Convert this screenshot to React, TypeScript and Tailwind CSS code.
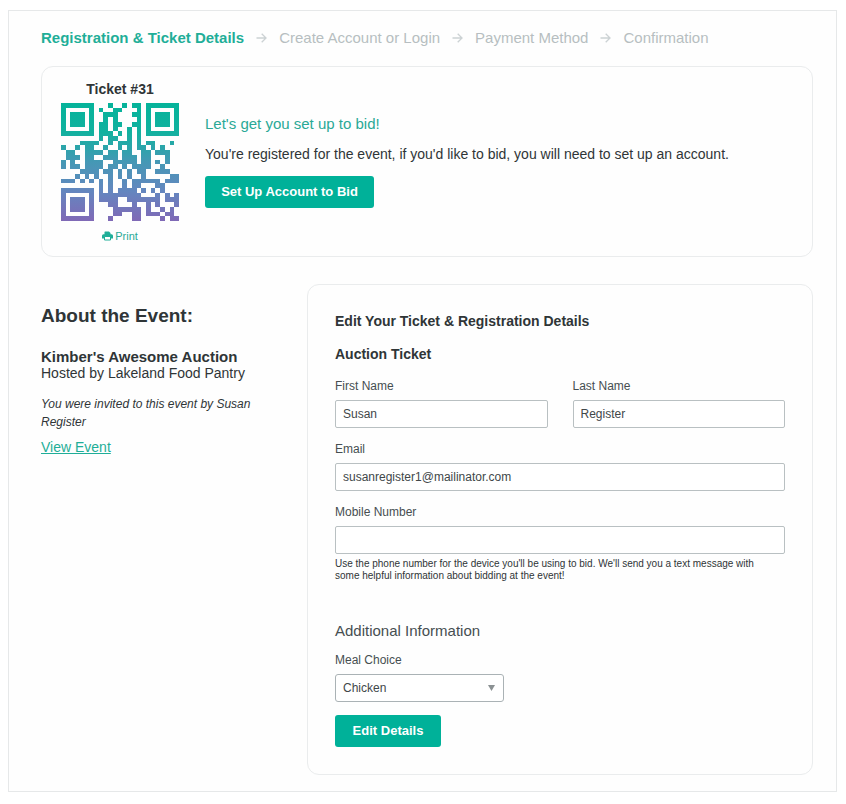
import { useState } from 'react'

const STEPS = ['Registration & Ticket Details', 'Create Account or Login', 'Payment Method', 'Confirmation']

const MEALS = ['Chicken', 'Beef', 'Vegetarian']

const QR_ROWS = [
  '#######...#..#.##.#######',
  '#.....#.#..##...#.#.....#',
  '#.###.#..###...##.#.###.#',
  '#.###.#..#.#....#.#.###.#',
  '#.###.#.##.##..##.#.###.#',
  '#.....#.##.#..#.#.#.....#',
  '#######.###.#.#.#.#######',
  '........#.##..#.#........',
  '....####..#.###.#.##...#.',
  '#..#.##..#..#.#.##.#.#...',
  '.##..####.##.##..##.###..',
  '.###.##..###.###.##...#..',
  '#.#..####..#####.##.#.#..',
  '#.##.####.##.#.####..#...',
  '....####.##.#.#.##..###..',
  '...#.#.#..#.#.#..#.....##',
  '###.#.#.#.#..#.######.###',
  '........#.#..#.##...##...',
  '#######.#.#.####.#.#.#...',
  '#.....#.#########...#.#.#',
  '#.###.#.####..#######.###',
  '#.###.#...##...#..#.#...#',
  '#.###.#....######.#..#.#.',
  '#.....#....##..##.###.##.',
  '#######...#....##....#.##',
]

const qrPath = QR_ROWS.flatMap((row, y) =>
  [...row].map((cell, x) => (cell === '#' ? `M${x} ${y}h1v1h-1z` : ''))
).join('')

function QrCode() {
  return (
    <svg viewBox="0 0 25 25" className="size-[118px]" shapeRendering="crispEdges" role="img" aria-label="Ticket QR code">
      <defs>
        <linearGradient id="qr" gradientUnits="userSpaceOnUse" x1="0" y1="0" x2="0" y2="25">
          <stop offset="0" stopColor="#05b39a" />
          <stop offset="0.25" stopColor="#12b19f" />
          <stop offset="0.5" stopColor="#4598b5" />
          <stop offset="0.75" stopColor="#6486bf" />
          <stop offset="1" stopColor="#8069b6" />
        </linearGradient>
      </defs>
      <path d={qrPath} fill="url(#qr)" />
    </svg>
  )
}

function StepArrow() {
  return (
    <svg viewBox="0 0 11 10" className="h-[10px] w-[11px]" fill="none" stroke="#ccd2d4" strokeWidth="1.3" aria-hidden="true">
      <path d="M0.500 5H10M5.700 0.800L10 5 5.700 9.200" />
    </svg>
  )
}

function PrintIcon() {
  return (
    <svg viewBox="0 0 11 10" className="h-[10px] w-[11px]" aria-hidden="true">
      <path d="M3 0.5h4l1.5 1.5v2H2.5V1z" fill="#1fae98" />
      <path d="M1.500 3.200h8Q11 3.200 11 4.700V7.500H9V6H2v1.500H0V4.700q0-1.500 1.500-1.500z" fill="#1fae98" />
      <path d="M2.500 5.500h6v3.500h-6z" fill="#fff" stroke="#1fae98" />
    </svg>
  )
}

interface FieldProps {
  id: string
  label: string
  value: string
  type?: string
  onChange: (value: string) => void
}

function Field({ id, label, value, type = 'text', onChange }: FieldProps) {
  return (
    <div className="min-w-0 flex-1">
      <label htmlFor={id} className="block text-[12px] leading-4 text-[#464e51]">{label}</label>
      <input
        id={id}
        type={type}
        value={value}
        onChange={e => onChange(e.target.value)}
        className="mt-[6px] block h-[28px] w-full rounded-[2px] border border-[#b9c0c2] bg-white px-[7px] text-[12px] text-[#414749] focus:border-[#00b199] focus:outline-none"
      />
    </div>
  )
}

export default function App() {
  const [firstName, setFirstName] = useState('Susan')
  const [lastName, setLastName] = useState('Register')
  const [email, setEmail] = useState('susanregister1@mailinator.com')
  const [mobile, setMobile] = useState('')
  const [meal, setMeal] = useState('Chicken')

  return (
    <div className="bg-white py-[10px] pr-[9px] pl-2 font-['Liberation_Sans',Arial,sans-serif] text-[#2f3537]">
      <main className="border border-[#e6e8e9] bg-[#fefefe] pt-[17px] pr-[23px] pb-4 pl-8">
        <nav aria-label="Progress">
          <ol className="flex items-center gap-3 text-[15px] leading-5">
            {STEPS.map((step, i) => (
              <li key={step} className="flex items-center gap-3 whitespace-nowrap">
                {i > 0 && <StepArrow />}
                <span className={i === 0 ? 'font-bold text-[#1fae98]' : 'text-[#b7bec1]'}>{step}</span>
              </li>
            ))}
          </ol>
        </nav>

        <section className="mt-[18px] flex rounded-[12px] border border-[#eaeced] pt-3 pb-3 pl-[18px]">
          <div className="flex w-[120px] flex-col items-center">
            <h2 className="text-[14px] leading-5 font-bold">Ticket #31</h2>
            <div className="mt-1">
              <QrCode />
            </div>
            <a href="#print" className="mt-[7px] flex items-center gap-[2px] text-[11px] leading-4 text-[#2aa996]">
              <PrintIcon />
              Print
            </a>
          </div>
          <div className="ml-[25px] pt-[35px]">
            <h3 className="text-[15px] leading-5 text-[#2aa996]">Let's get you set up to bid!</h3>
            <p className="mt-[10px] text-[14px] leading-5">
              You're registered for the event, if you'd like to bid, you will need to set up an account.
            </p>
            <button type="button" className="mt-3 h-8 w-[169px] rounded-[3px] bg-[#00b199] text-[13px] font-bold text-white">
              Set Up Account to Bid
            </button>
          </div>
        </section>

        <div className="mt-[27px] flex items-start">
          <section className="w-[266px] shrink-0 pt-5 pr-10">
            <h2 className="text-[19px] leading-6 font-bold">About the Event:</h2>
            <h3 className="mt-[21px] text-[15px] leading-4 font-bold">Kimber's Awesome Auction</h3>
            <p className="text-[14px] leading-4">Hosted by Lakeland Food Pantry</p>
            <p className="mt-[14px] text-[12px] leading-[18px] italic">You were invited to this event by Susan Register</p>
            <a href="#event" className="mt-[6px] inline-block text-[14px] leading-5 text-[#1fae98] underline">View Event</a>
          </section>

          <form
            onSubmit={e => e.preventDefault()}
            className="min-w-0 flex-1 rounded-[12px] border border-[#eaeced] px-[27px] pt-[26px] pb-[27px]"
          >
            <h2 className="text-[14px] leading-5 font-bold">Edit Your Ticket &amp; Registration Details</h2>
            <h3 className="mt-[13px] text-[14px] leading-5 font-bold">Auction Ticket</h3>

            <div className="mt-[14px] flex gap-[25px]">
              <Field id="first-name" label="First Name" value={firstName} onChange={setFirstName} />
              <Field id="last-name" label="Last Name" value={lastName} onChange={setLastName} />
            </div>
            <div className="mt-[13px]">
              <Field id="email" label="Email" type="email" value={email} onChange={setEmail} />
            </div>
            <div className="mt-[13px]">
              <Field id="mobile" label="Mobile Number" type="tel" value={mobile} onChange={setMobile} />
            </div>
            <p className="mt-1 pr-5 text-[10px] leading-3">
              Use the phone number for the device you'll be using to bid. We'll send you a text message with some helpful
              information about bidding at the event!
            </p>

            <h3 className="mt-[39px] text-[15px] leading-5 text-[#464e51]">Additional Information</h3>
            <label htmlFor="meal" className="mt-[11px] block text-[12px] leading-4 text-[#464e51]">Meal Choice</label>
            <div className="relative mt-[6px] w-[169px]">
              <select
                id="meal"
                value={meal}
                onChange={e => setMeal(e.target.value)}
                className="block h-[28px] w-full appearance-none rounded-[3px] border border-[#aab2b5] bg-white px-[7px] text-[12px] text-[#414749]"
              >
                {MEALS.map(m => <option key={m}>{m}</option>)}
              </select>
              <svg viewBox="0 0 7 6" className="pointer-events-none absolute top-[11px] right-[9px] h-[6px] w-[7px]" aria-hidden="true">
                <path d="M0 0h7L3.500 6z" fill="#8b9193" />
              </svg>
            </div>
            <button type="submit" className="mt-[13px] block h-8 w-[106px] rounded-[3px] bg-[#00b199] text-[13px] font-bold text-white">
              Edit Details
            </button>
          </form>
        </div>
      </main>
    </div>
  )
}
